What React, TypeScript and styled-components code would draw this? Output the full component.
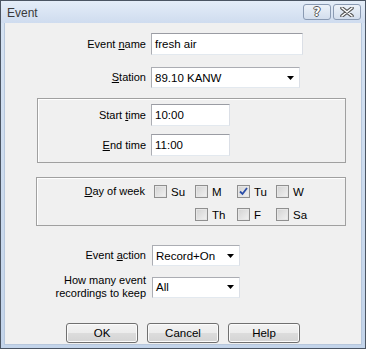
import React from "react";
import styled, { createGlobalStyle } from "styled-components";

const GlobalStyle = createGlobalStyle`
  html, body {
    margin: 0;
    padding: 0;
    background: #ffffff;
  }
  * {
    box-sizing: border-box;
  }
`;

const Window = styled.div`
  width: 366px;
  height: 349px;
  border: 1px solid #4b5563;
  background: linear-gradient(#d6e3f3, #c3d4ea);
  display: flex;
  flex-direction: column;
  font-family: "Liberation Sans", Arial, sans-serif;
  font-size: 11px;
  color: #000;
`;

const TitleBar = styled.div`
  height: 22px;
  flex: none;
  display: flex;
  align-items: center;
  padding: 0 4px 0 6px;
  background: linear-gradient(#e4edf8, #cfdcef);
`;

const Title = styled.div`
  flex: 1;
  font-size: 12px;
  color: #3a3a3a;
  padding-top: 2px;
`;

const CaptionButton = styled.div`
  width: 28px;
  height: 16px;
  margin-left: 2px;
  border: 1px solid #8a9ab2;
  border-radius: 3px;
  background: linear-gradient(#edf2f9, #d3deed);
  display: flex;
  align-items: center;
  justify-content: center;
  font-family: "DejaVu Sans", sans-serif;
  font-weight: bold;
  font-size: 12px;
  color: #ffffff;
  text-shadow: 1px 0 0 #555, -1px 0 0 #555, 0 1px 0 #555, 0 -1px 0 #555;
`;

const Body = styled.div`
  flex: 1;
  margin: 0 3px 3px 3px;
  background: #f0f0f0;
  border: 1px solid #b7c7dc;
  border-top: none;
  padding-top: 10px;
  display: flex;
  flex-direction: column;
`;

const Row = styled.div<{ $labelW: number; $gap?: number; $mt?: number; $top?: boolean }>`
  display: grid;
  grid-template-columns: ${(p) => p.$labelW}px auto;
  column-gap: ${(p) => p.$gap ?? 5}px;
  align-items: ${(p) => (p.$top ? "start" : "center")};
  margin-top: ${(p) => p.$mt ?? 0}px;
`;

const Label = styled.div<{ $lh?: number }>`
  text-align: right;
  line-height: ${(p) => p.$lh ?? 13}px;
  white-space: nowrap;
`;

const Key = styled.span`
  text-decoration: underline;
  text-underline-offset: 1px;
`;

const TextBox = styled.div<{ $w: number }>`
  width: ${(p) => p.$w}px;
  height: 22px;
  background: #ffffff;
  border: 1px solid #abadb3;
  border-top-color: #9a9ca3;
  border-right-color: #dbdfe6;
  border-bottom-color: #e3e9ef;
  padding: 0 3px;
  display: flex;
  align-items: center;
  font-size: 11.5px;
`;

const Select = styled.div<{ $w: number }>`
  width: ${(p) => p.$w}px;
  height: 21px;
  background: #ffffff;
  border: 1px solid #abadb3;
  border-right-color: #dbdfe6;
  border-bottom-color: #e3e9ef;
  padding: 0 5px 0 3px;
  display: flex;
  align-items: center;
  justify-content: space-between;
  font-size: 11.5px;
`;

const Group = styled.div<{ $mt: number; $ml: number }>`
  margin: ${(p) => p.$mt}px 15px 0 ${(p) => p.$ml}px;
  border: 1px solid #a0a0a0;
  box-shadow: inset 1px 1px 0 #ffffff;
`;

const TimeGroup = styled(Group)`
  padding: 5px 0 6px;
  display: flex;
  flex-direction: column;
  gap: 8px;
`;

const DayGroup = styled(Group)`
  padding: 6px 0 3px;
`;

const DayGrid = styled.div`
  display: grid;
  grid-template-columns: 41px 42px 39px auto;
  row-gap: 8px;
`;

const Check = styled.label<{ $col?: number }>`
  display: flex;
  align-items: center;
  gap: 4px;
  height: 15px;
  font-size: 11.5px;
  ${(p) => (p.$col ? `grid-column: ${p.$col};` : "")}
`;

const Box = styled.span`
  width: 13px;
  height: 13px;
  border: 1px solid #8f8f8f;
  background: linear-gradient(135deg, #d2d2d2, #f2f2f2);
  box-shadow: inset 0 0 0 1px #e6e6e6;
  display: flex;
  align-items: center;
  justify-content: center;
`;

const Buttons = styled.div`
  display: flex;
  justify-content: center;
  gap: 9px;
  margin-top: 23px;
`;

const Button = styled.div`
  width: 72px;
  height: 20px;
  border: 1px solid #707070;
  border-radius: 3px;
  background: linear-gradient(#f3f3f3 0%, #ececec 48%, #dcdcdc 52%, #d4d4d4 100%);
  box-shadow: inset 0 0 0 1px #fbfbfb;
  display: flex;
  align-items: center;
  justify-content: center;
  font-size: 11.5px;
`;

const Arrow = () => (
  <svg width="7" height="4" viewBox="0 0 7 4">
    <path d="M0 0 H7 L3.5 4 Z" fill="#000" />
  </svg>
);

const CheckMark = () => (
  <svg width="9" height="9" viewBox="0 0 9 9">
    <path d="M1 4.5 L3.5 7 L8 1" stroke="#2b4ea8" strokeWidth="1.8" fill="none" />
  </svg>
);

function Day({ name, checked, col }: { name: string; checked?: boolean; col?: number }) {
  return (
    <Check $col={col}>
      <Box>{checked && <CheckMark />}</Box>
      {name}
    </Check>
  );
}

export default function App() {
  return (
    <>
      <GlobalStyle />
      <Window>
        <TitleBar>
          <Title>Event</Title>
          <CaptionButton>?</CaptionButton>
          <CaptionButton>
            <svg width="14" height="10" viewBox="0 0 14 10">
              <path
                d="M2 1 L12 9 M12 1 L2 9"
                stroke="#555"
                strokeWidth="3.6"
                strokeLinecap="round"
              />
              <path
                d="M2 1 L12 9 M12 1 L2 9"
                stroke="#fff"
                strokeWidth="1.6"
                strokeLinecap="round"
              />
            </svg>
          </CaptionButton>
        </TitleBar>
        <Body>
          <Row $labelW={141}>
            <Label>
              Event <Key>n</Key>ame
            </Label>
            <TextBox $w={152}>fresh air</TextBox>
          </Row>
          <Row $labelW={141} $mt={12}>
            <Label>
              <Key>S</Key>tation
            </Label>
            <Select $w={149}>
              89.10 KANW
              <Arrow />
            </Select>
          </Row>

          <TimeGroup $mt={10} $ml={32}>
            <Row $labelW={108}>
              <Label>
                Start <Key>t</Key>ime
              </Label>
              <TextBox $w={79}>10:00</TextBox>
            </Row>
            <Row $labelW={108}>
              <Label>
                <Key>E</Key>nd time
              </Label>
              <TextBox $w={79}>11:00</TextBox>
            </Row>
          </TimeGroup>

          <DayGroup $mt={14} $ml={31}>
            <Row $labelW={108} $gap={9} $top>
              <Label $lh={15}>
                <Key>D</Key>ay of week
              </Label>
              <DayGrid>
                <Day name="Su" />
                <Day name="M" />
                <Day name="Tu" checked />
                <Day name="W" />
                <Day name="Th" col={2} />
                <Day name="F" />
                <Day name="Sa" />
              </DayGrid>
            </Row>
          </DayGroup>

          <Row $labelW={141} $gap={6} $mt={19}>
            <Label>
              Event <Key>a</Key>ction
            </Label>
            <Select $w={88}>
              Record+On
              <Arrow />
            </Select>
          </Row>
          <Row $labelW={141} $gap={6} $mt={8}>
            <Label>
              How many event
              <br />
              recordings to keep
            </Label>
            <Select $w={88}>
              All
              <Arrow />
            </Select>
          </Row>

          <Buttons>
            <Button>OK</Button>
            <Button>Cancel</Button>
            <Button>Help</Button>
          </Buttons>
        </Body>
      </Window>
    </>
  );
}
